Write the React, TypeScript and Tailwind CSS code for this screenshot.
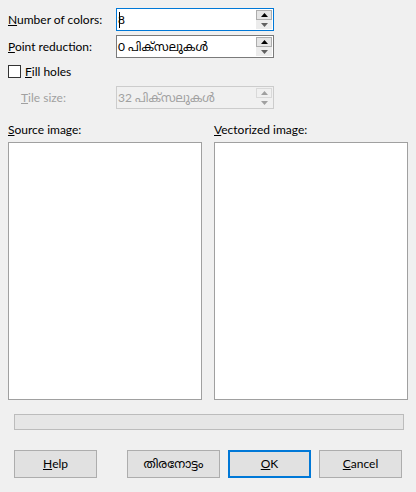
import React from "react";

const font = "font-['Segoe_UI','Lato','Noto_Sans','Noto_Sans_Malayalam',sans-serif]";

function Spin({ disabled }: { disabled?: boolean }) {
  const tri = disabled ? "#a0a0a0" : "#000000";
  const tri2 = disabled ? "#a0a0a0" : "#606060";
  return (
    <div className="absolute right-[1px] top-[1px] flex flex-col w-[16px] h-[19px]">
      <div className={`h-[10px] flex items-center justify-center border ${disabled ? "border-[#d9d9d9] bg-[#f0f0f0]" : "border-[#adadad] bg-[#e5e5e5]"}`}>
        <svg width="7" height="4" viewBox="0 0 7 4"><path d="M3.5 0L7 4H0z" fill={tri} /></svg>
      </div>
      <div className={`h-[9px] flex items-center justify-center ${disabled ? "bg-[#f0f0f0]" : "bg-[#ececec]"}`}>
        <svg width="7" height="4" viewBox="0 0 7 4"><path d="M0 0H7L3.5 4z" fill={tri2} /></svg>
      </div>
    </div>
  );
}

function Field({ value, focused, disabled }: { value: string; focused?: boolean; disabled?: boolean }) {
  const border = focused ? "border-[#0078d7]" : disabled ? "border-[#cccccc]" : "border-[#7a7a7a]";
  return (
    <div className={`relative w-[158px] h-[23px] border ${border} ${disabled ? "bg-[#f0f0f0] text-[#a0a0a0]" : "bg-white text-black"} flex items-center pl-[1px]`}>
      <span className="text-[12px] leading-[16px] relative">
        {focused && <span className="absolute left-[1px] top-0 w-[1px] h-[16px] bg-black" />}
        {value}
      </span>
      <Spin disabled={disabled} />
    </div>
  );
}

function Btn({ children, w, primary }: { children: React.ReactNode; w: string; primary?: boolean }) {
  return (
    <div className={`${w} h-[28px] flex items-center justify-center bg-[#e1e1e1] text-[12px] text-black ${primary ? "border-2 border-[#0078d7]" : "border border-[#adadad]"}`}>
      {children}
    </div>
  );
}

export default function App() {
  return (
    <div className={`w-[416px] h-[492px] bg-[#f0f0f0] text-black ${font} text-[12px] leading-[16px] flex flex-col`}>
      <div className="flex flex-col pl-[8px] pt-[8px]">
        <div className="flex items-center h-[23px]">
          <div className="w-[108px]"><u>N</u>umber of colors:</div>
          <Field value="8" focused />
        </div>
        <div className="flex items-center h-[23px] mt-[4px]">
          <div className="w-[108px]"><u>P</u>oint reduction:</div>
          <Field value="0 പിക്സലുകൾ" />
        </div>
        <div className="flex items-center h-[13px] mt-[7px]">
          <div className="w-[13px] h-[13px] border border-[#333333] bg-white" />
          <div className="ml-[4px]"><u>F</u>ill holes</div>
        </div>
        <div className="flex items-center h-[23px] mt-[8px]">
          <div className="w-[108px] pl-[13px] text-[#a0a0a0]"><u>T</u>ile size:</div>
          <Field value="32 പിക്സലുകൾ" disabled />
        </div>
      </div>
      <div className="grid grid-cols-[194px_194px] gap-x-[12px] pl-[8px] mt-[13px]">
        <div><u>S</u>ource image:</div>
        <div><u>V</u>ectorized image:</div>
        <div className="mt-[4px] h-[258px] bg-white border border-[#a0a0a0]" />
        <div className="mt-[4px] h-[258px] bg-white border border-[#a0a0a0]" />
      </div>
      <div className="ml-[14px] mt-[14px] w-[390px] h-[16px] bg-[#e6e6e6] border border-[#bcbcbc]" />
      <div className="flex ml-[14px] mt-[20px]">
        <Btn w="w-[83px]"><u>H</u>elp</Btn>
        <div className="w-[30px]" />
        <Btn w="w-[93px]">തിരനോട്ടം</Btn>
        <div className="w-[8px]" />
        <Btn w="w-[83px]" primary><u>O</u>K</Btn>
        <div className="w-[8px]" />
        <Btn w="w-[83px]"><u>C</u>ancel</Btn>
      </div>
    </div>
  );
}
